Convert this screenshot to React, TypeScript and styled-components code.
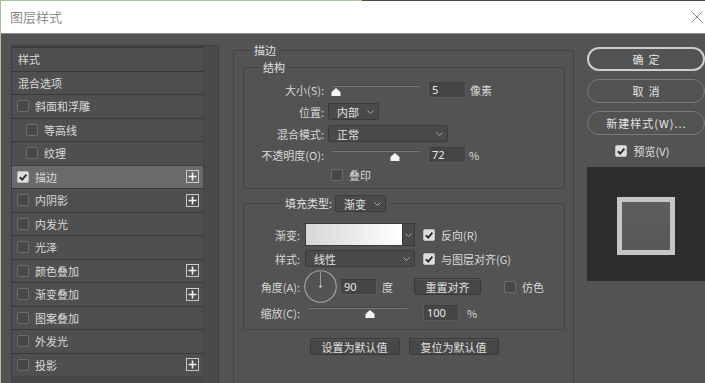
import React from "react";
import styled, { createGlobalStyle } from "styled-components";

const FONT = `"Noto Sans CJK SC", "Noto Sans", "Liberation Sans", sans-serif`;

const GlobalStyle = createGlobalStyle`
  html, body { margin: 0; padding: 0; background: #535353; }
  body { font-family: ${FONT}; font-size: 11px; color: #d9d9d9; overflow: hidden; }
  *, *::before, *::after { box-sizing: border-box; }
`;

const Window = styled.div`
  width: 705px;
  height: 383px;
  overflow: hidden;
  display: flex;
  flex-direction: column;
  background: #535353;
  border-left: 1px solid #a3c698;
`;

const TitleBar = styled.header`
  flex: 0 0 34px;
  display: flex;
  align-items: center;
  justify-content: space-between;
  padding: 1px 2px 0 9px;
  background: linear-gradient(to right, #a3c698 361px, #4b4b4b 361px) top left / 100% 1px no-repeat, #ffffff;
  border-bottom: 1px solid #8c8c8c;
`;

const Title = styled.h1`
  margin: 0;
  font-size: 13px;
  font-weight: 400;
  color: #8e8e8e;
  line-height: 16px;
`;

const Body = styled.div`
  flex: 1;
  min-height: 0;
  overflow: hidden;
  display: flex;
  align-items: flex-start;
  padding: 8px 0 0 10px;
`;

/* ---------- left list ---------- */
const StyleList = styled.div`
  flex: 0 0 208px;
  height: 360px;
  margin-top: 3px;
  display: flex;
  border: 1px solid #3d3d3d;
  background: #484848;
`;

const Rows = styled.div`
  width: 191px;
  padding-top: 1px;
  display: flex;
  flex-direction: column;
`;

const Track = styled.div`
  flex: 1;
  background: #4a4a4a;
  border-left: 1px solid #444;
`;

const ListRow = styled.div<{ $selected?: boolean; $indent: number }>`
  height: 23.5px;
  flex: 0 0 23.5px;
  display: flex;
  align-items: center;
  padding-left: ${(p) => p.$indent}px;
  padding-right: 4px;
  border-top: 1px solid #3a3a3a;
  background: ${(p) => (p.$selected ? "#6a6a6a" : "#4f4f4f")};
  color: #dadada;
  line-height: 14px;
  white-space: nowrap;
`;

const RowText = styled.span<{ $ml?: number }>`
  margin-left: ${(p) => p.$ml ?? 0}px;
`;

const PlusBox = styled.span`
  margin-left: auto;
  width: 13px;
  height: 13px;
  border: 1px solid #c9c9c9;
  display: flex;
  align-items: center;
  justify-content: center;
`;

/* ---------- common controls ---------- */
const CheckBox = styled.span<{ $on?: boolean; $ml?: number }>`
  flex-shrink: 0;
  width: 12px;
  height: 12px;
  margin-left: ${(p) => p.$ml ?? 0}px;
  border-radius: 2px;
  border: 1px solid ${(p) => (p.$on ? "#bcbcbc" : "#6b6b6b")};
  background: ${(p) => (p.$on ? "#dedede" : "#474747")};
  display: flex;
  align-items: center;
  justify-content: center;
`;

const Check = ({ on, ml }: { on?: boolean; ml?: number }) => (
  <CheckBox $on={on} $ml={ml}>
    {on && (
      <svg width="10" height="10" viewBox="0 0 10 10">
        <path d="M1.8 5.2 L4.2 7.5 L8.4 2.6" stroke="#2e2e2e" strokeWidth="1.9" fill="none" />
      </svg>
    )}
  </CheckBox>
);

const Chevron = () => (
  <svg width="7" height="4" viewBox="0 0 7 4">
    <path d="M0.5 0.5 L3.5 3.5 L6.5 0.5" stroke="#a9a9a9" strokeWidth="1" fill="none" />
  </svg>
);

const SelectBox = styled.div<{ $w: number; $ml?: number; $pl?: number }>`
  flex-shrink: 0;
  width: ${(p) => p.$w}px;
  height: 17px;
  margin-left: ${(p) => p.$ml ?? 0}px;
  padding: 0 4px 0 ${(p) => p.$pl ?? 8}px;
  display: flex;
  align-items: center;
  justify-content: space-between;
  background: #4a4a4a;
  border: 1px solid #3b3b3b;
  border-radius: 2px;
  color: #e0e0e0;
  line-height: 14px;
`;

const Select = ({ w, ml, pl, children }: { w: number; ml?: number; pl?: number; children: React.ReactNode }) => (
  <SelectBox $w={w} $ml={ml} $pl={pl}>
    <span>{children}</span>
    <Chevron />
  </SelectBox>
);

const NumField = styled.div<{ $w: number; $ml?: number }>`
  flex-shrink: 0;
  width: ${(p) => p.$w}px;
  height: 16px;
  margin-left: ${(p) => p.$ml ?? 0}px;
  padding-left: 3px;
  display: flex;
  align-items: center;
  background: #454545;
  border: 1px solid #5c5c5c;
  border-top-color: #3e3e3e;
  color: #e8e8e8;
  font-family: "Noto Sans", "Liberation Sans", sans-serif;
  font-size: 11px;
`;

const Unit = styled.span<{ $ml?: number }>`
  margin-left: ${(p) => p.$ml ?? 0}px;
  color: #d9d9d9;
`;

const Label = styled.span<{ $w: number }>`
  flex-shrink: 0;
  width: ${(p) => p.$w}px;
  text-align: right;
  color: #d6d6d6;
`;

const SliderBox = styled.div<{ $w: number; $ml?: number }>`
  position: relative;
  flex-shrink: 0;
  align-self: stretch;
  width: ${(p) => p.$w}px;
  margin-left: ${(p) => p.$ml ?? 0}px;
`;

const SliderTrack = styled.div`
  position: absolute;
  left: 0;
  right: 0;
  top: 3px;
  height: 2px;
  background: #7a7a7a;
  border-top: 1px solid #464646;
`;

const SliderThumb = styled.svg`
  position: absolute;
  top: 6px;
  width: 10px;
  height: 8px;
  margin-left: -5px;
`;

const Slider = ({ w, ml, value }: { w: number; ml?: number; value: number }) => (
  <SliderBox $w={w} $ml={ml}>
    <SliderTrack />
    <SliderThumb viewBox="0 0 10 8" style={{ left: `${value * 100}%` }}>
      <path d="M5 0 L9.5 4 L9.5 8 L0.5 8 L0.5 4 Z" fill="#f4f4f4" />
    </SliderThumb>
  </SliderBox>
);

const FlatButton = styled.div<{ $w: number; $ml?: number; $h?: number }>`
  flex-shrink: 0;
  width: ${(p) => p.$w}px;
  height: ${(p) => p.$h ?? 17}px;
  margin-left: ${(p) => p.$ml ?? 0}px;
  display: flex;
  align-items: center;
  justify-content: center;
  background: #474747;
  border: 1px solid #3a3a3a;
  box-shadow: inset 0 1px 0 #555;
  border-radius: 2px;
  color: #e0e0e0;
  line-height: 14px;
`;

/* ---------- middle ---------- */
const Main = styled.div`
  flex: 0 0 341px;
  margin-left: 14px;
`;

const Group = styled.fieldset<{ $mt?: number }>`
  margin: ${(p) => p.$mt ?? 0}px 0 0 0;
  padding: 0;
  min-width: 0;
  border: 1px solid #444444;
`;

const Legend = styled.legend<{ $ml: number; $lh?: number }>`
  margin-left: ${(p) => p.$ml}px;
  padding: 0 3px;
  line-height: ${(p) => p.$lh ?? 16}px;
  color: #e0e0e0;
  font-size: 11px;
`;

const LegendInner = styled.span`
  display: inline-flex;
  align-items: center;
  white-space: nowrap;
`;

const GroupBody = styled.div<{ $pad: string; $gap?: number }>`
  padding: ${(p) => p.$pad};
  display: flex;
  flex-direction: column;
  gap: ${(p) => p.$gap ?? 0}px;
`;

const CtrlRow = styled.div<{ $h: number; $mt?: number }>`
  display: flex;
  align-items: center;
  height: ${(p) => p.$h}px;
  margin-top: ${(p) => p.$mt ?? 0}px;
  line-height: 14px;
  white-space: nowrap;
`;

const Swatch = styled.div<{ $ml?: number }>`
  flex-shrink: 0;
  display: flex;
  height: 23px;
  margin-left: ${(p) => p.$ml ?? 0}px;
`;

const SwatchFill = styled.div`
  width: 98px;
  height: 100%;
  border: 1px solid #3a3a3a;
  background: linear-gradient(to right, #d6d6d6 0%, #f3f3f3 70%, #ffffff 100%);
`;

const SwatchArrow = styled.div`
  width: 12px;
  height: 100%;
  display: flex;
  align-items: center;
  justify-content: center;
  background: #4a4a4a;
  border: 1px solid #3b3b3b;
  border-left: none;
`;

const Dial = styled.svg<{ $ml?: number }>`
  flex-shrink: 0;
  margin-left: ${(p) => p.$ml ?? 0}px;
`;

const ButtonBar = styled.div`
  display: flex;
  justify-content: center;
  gap: 9px;
  margin-top: 8px;
`;

/* ---------- right ---------- */
const Side = styled.div`
  flex: 0 0 118px;
  margin-left: 13px;
  margin-top: 5px;
  display: flex;
  flex-direction: column;
  gap: 8px;
`;

const Pill = styled.button<{ $primary?: boolean; $ls?: number }>`
  height: 24px;
  width: 100%;
  padding: 0 0 0 ${(p) => p.$ls ?? 0}px;
  border-radius: 12px;
  background: transparent;
  border: ${(p) => (p.$primary ? "2px solid #cdcdcd" : "1px solid #7a7a7a")};
  color: #e4e4e4;
  font-family: ${FONT};
  font-size: 11px;
  letter-spacing: ${(p) => p.$ls ?? 0}px;
  line-height: 14px;
`;

const PreviewToggle = styled.div`
  display: flex;
  align-items: center;
  justify-content: center;
  gap: 7px;
  margin-top: 2px;
  height: 12px;
  color: #e0e0e0;
  line-height: 14px;
  padding-right: 8px;
`;

const PreviewPane = styled.div`
  margin-top: 2px;
  height: 114px;
  background: #2d2d2d;
  display: flex;
  align-items: center;
  justify-content: center;
  padding-top: 3px;
`;

const PreviewSquare = styled.div`
  width: 58px;
  height: 58px;
  border: 5px solid #c6c6c6;
  background: linear-gradient(to bottom, #5e5e5e, #575757);
`;

type Item = { label: string; check?: boolean; on?: boolean; indent?: boolean; selected?: boolean; plus?: boolean };

const items: Item[] = [
  { label: "样式" },
  { label: "混合选项" },
  { label: "斜面和浮雕", check: true },
  { label: "等高线", check: true, indent: true },
  { label: "纹理", check: true, indent: true },
  { label: "描边", check: true, on: true, selected: true, plus: true },
  { label: "内阴影", check: true, plus: true },
  { label: "内发光", check: true },
  { label: "光泽", check: true },
  { label: "颜色叠加", check: true, plus: true },
  { label: "渐变叠加", check: true, plus: true },
  { label: "图案叠加", check: true },
  { label: "外发光", check: true },
  { label: "投影", check: true, plus: true },
];

const Plus = () => (
  <PlusBox>
    <svg width="9" height="9" viewBox="0 0 9 9">
      <path d="M4.5 0.5 V8.5 M0.5 4.5 H8.5" stroke="#f0f0f0" strokeWidth="1.6" />
    </svg>
  </PlusBox>
);

export default function App() {
  return (
    <>
      <GlobalStyle />
      <Window>
        <TitleBar>
          <Title>图层样式</Title>
          <svg width="12" height="12" viewBox="0 0 12 12">
            <path d="M0.5 0.5 L11.5 11.5 M11.5 0.5 L0.5 11.5" stroke="#8a8a8a" strokeWidth="1" />
          </svg>
        </TitleBar>
        <Body>
          <StyleList>
            <Rows>
              {items.map((it) => (
                <ListRow key={it.label} $selected={it.selected} $indent={it.check ? (it.indent ? 14 : 5) : 6}>
                  {it.check && <Check on={it.on} />}
                  <RowText $ml={it.check ? 6 : 0}>{it.label}</RowText>
                  {it.plus && <Plus />}
                </ListRow>
              ))}
            </Rows>
            <Track />
          </StyleList>

          <Main>
            <Group>
              <Legend $ml={17}>描边</Legend>
              <GroupBody $pad="1px 8px 40px 9px">
                <Group>
                  <Legend $ml={16}>结构</Legend>
                  <GroupBody $pad="7px 0 7px 0" $gap={5}>
                    <CtrlRow $h={16}>
                      <Label $w={80}>大小(S):</Label>
                      <Slider w={86} ml={9} value={0.035} />
                      <NumField $w={38} $ml={9}>5</NumField>
                      <Unit $ml={4}>像素</Unit>
                    </CtrlRow>
                    <CtrlRow $h={17}>
                      <Label $w={80}>位置:</Label>
                      <Select w={51} ml={4} pl={8}>内部</Select>
                    </CtrlRow>
                    <CtrlRow $h={17}>
                      <Label $w={80}>混合模式:</Label>
                      <Select w={120} ml={4} pl={8}>正常</Select>
                    </CtrlRow>
                    <CtrlRow $h={16}>
                      <Label $w={80}>不透明度(O):</Label>
                      <Slider w={86} ml={9} value={0.72} />
                      <NumField $w={38} $ml={9}>72</NumField>
                      <Unit $ml={3}>%</Unit>
                    </CtrlRow>
                    <CtrlRow $h={13}>
                      <Check ml={87} />
                      <Unit $ml={6}>叠印</Unit>
                    </CtrlRow>
                  </GroupBody>
                </Group>

                <Group $mt={6}>
                  <Legend $ml={38} $lh={17}>
                    <LegendInner>
                      填充类型:
                      <Select w={51} ml={3} pl={8}>渐变</Select>
                    </LegendInner>
                  </Legend>
                  <GroupBody $pad="11px 0 8px 0">
                    <CtrlRow $h={23}>
                      <Label $w={56}>渐变:</Label>
                      <Swatch $ml={5}>
                        <SwatchFill />
                        <SwatchArrow>
                          <Chevron />
                        </SwatchArrow>
                      </Swatch>
                      <Check on ml={8} />
                      <Unit $ml={6}>反向(R)</Unit>
                    </CtrlRow>
                    <CtrlRow $h={17} $mt={4}>
                      <Label $w={56}>样式:</Label>
                      <Select w={110} ml={5} pl={8}>线性</Select>
                      <Check on ml={8} />
                      <Unit $ml={6}>与图层对齐(G)</Unit>
                    </CtrlRow>
                    <CtrlRow $h={33} $mt={3}>
                      <Label $w={56}>角度(A):</Label>
                      <Dial $ml={4} width="33" height="33" viewBox="0 0 33 33">
                        <circle cx="16.5" cy="16.5" r="15.8" stroke="#a9a9a9" strokeWidth="1.1" fill="none" />
                        <path d="M16.5 2 V16.5" stroke="#9a9a9a" strokeWidth="1" />
                        <circle cx="16.5" cy="16.5" r="1.3" fill="#c8c8c8" />
                      </Dial>
                      <NumField $w={37} $ml={3}>90</NumField>
                      <Unit $ml={5}>度</Unit>
                      <FlatButton $w={67} $ml={21}>重置对齐</FlatButton>
                      <Check ml={23} />
                      <Unit $ml={6}>仿色</Unit>
                    </CtrlRow>
                    <CtrlRow $h={17} $mt={1}>
                      <Label $w={56}>缩放(C):</Label>
                      <Slider w={98} ml={9} value={0.62} />
                      <NumField $w={36} $ml={16}>100</NumField>
                      <Unit $ml={8}>%</Unit>
                    </CtrlRow>
                  </GroupBody>
                </Group>

                <ButtonBar>
                  <FlatButton $w={90}>设置为默认值</FlatButton>
                  <FlatButton $w={90}>复位为默认值</FlatButton>
                </ButtonBar>
              </GroupBody>
            </Group>
          </Main>

          <Side>
            <Pill $primary $ls={5}>确定</Pill>
            <Pill $ls={5}>取消</Pill>
            <Pill $ls={1}>新建样式(W)...</Pill>
            <PreviewToggle>
              <Check on />
              <span>预览(V)</span>
            </PreviewToggle>
            <PreviewPane>
              <PreviewSquare />
            </PreviewPane>
          </Side>
        </Body>
      </Window>
    </>
  );
}
